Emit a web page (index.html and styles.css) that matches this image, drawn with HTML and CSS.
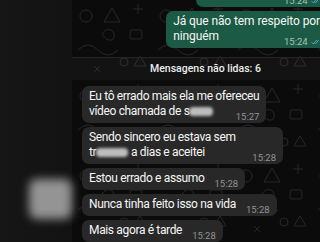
FILE: index.html
```html
<!DOCTYPE html>
<html lang="pt-BR">
<head>
    <meta charset="UTF-8">
    <meta name="viewport" content="width=device-width, initial-scale=1.0">
    <title>Conversa</title>
    <link rel="stylesheet" href="styles.css">
</head>
<body>
    <div class="screen">
        <aside class="side">
            <div class="blob"></div>
        </aside>

        <main class="chat">
            <div class="msg out cut">
                <span class="meta">15:24
                    <svg class="ticks" viewBox="0 0 12 7"><path d="M0.8 3.8l2.2 2.2 4.6-5.2M5.2 5.4l0.6 0.6 4.6-5.2"/></svg>
                </span>
            </div>
            <div class="msg out">Já que não tem respeito por<br>ninguém<span class="meta">15:24
                    <svg class="ticks" viewBox="0 0 12 7"><path d="M0.8 3.8l2.2 2.2 4.6-5.2M5.2 5.4l0.6 0.6 4.6-5.2"/></svg></span></div>

            <div class="unread">Mensagens não lidas: 6</div>

            <div class="msg in first">Eu tô errado mais ela me ofereceu<br>vídeo chamada de s<span class="hidden-word w1"></span><span class="meta">15:27</span></div>
            <div class="msg in wide">Sendo sincero eu estava sem<br>tr<span class="hidden-word w2"></span> a dias e aceitei<span class="meta">15:28</span></div>
            <div class="msg in">Estou errado e assumo<span class="meta">15:28</span></div>
            <div class="msg in">Nunca tinha feito isso na vida<span class="meta">15:28</span></div>
            <div class="msg in">Mais agora é tarde<span class="meta">15:28</span></div>
        </main>
    </div>
</body>
</html>
```

FILE: styles.css
```css
html, body {
    margin: 0;
    padding: 0;
    background: #111;
}
body {
    font-family: Roboto, "Liberation Sans", Arial, sans-serif;
    overflow: hidden;
}
.screen {
    display: flex;
    width: 320px;
    height: 242px;
    overflow: hidden;
}

/* blurred left part of the photo */
.side {
    flex: 0 0 72px;
    background: linear-gradient(90deg, #161616, #121212);
    padding: 179px 0 0 29px;
    box-sizing: border-box;
}
.blob {
    width: 43px;
    height: 40px;
    border-radius: 8px;
    background: #949494;
    filter: blur(5px);
}

/* chat column with wallpaper doodles */
.chat {
    flex: 0 0 267px;
    display: flex;
    flex-direction: column;
    background-color: #0b0b0b;
    background-image: url("data:image/svg+xml;utf8,<svg xmlns='http://www.w3.org/2000/svg' width='80' height='80' fill='none' stroke='%23262626' stroke-width='1'><circle cx='14' cy='16' r='6'/><path d='M40 8l8 14h-16z'/><rect x='58' y='30' width='12' height='9' rx='2'/><path d='M6 50q10-10 20 0t20 0'/><circle cx='52' cy='62' r='4'/><path d='M22 66l6 6M28 66l-6 6'/><path d='M66 4v10M61 9h10'/><path d='M30 34c4-6 10-6 12 0s-6 10-12 0z'/><path d='M68 56l6 10h-12z'/></svg>");
}

.msg {
    box-sizing: border-box;
    margin-top: 4px;
    padding: 3px 7px 1px 7px;
    border-radius: 7px;
    font-size: 12px;
    line-height: 15px;
    letter-spacing: -0.35px;
    color: #f6f6f6;
    white-space: nowrap;
}
.msg.in {
    align-self: flex-start;
    margin-left: 10px;
    background: #282828;
}
.msg.out {
    align-self: flex-end;
    margin-right: 12px;
    background: #1b5a44;
    letter-spacing: -0.1px;
}
.msg.cut {
    width: 131px;
    margin-top: -15px;
}
.msg.first {
    margin-top: 6px;
}
.msg.wide {
    width: 201px;
}

.meta {
    float: right;
    margin: 7px 0 0 10px;
    font-size: 9.5px;
    line-height: 11px;
    letter-spacing: 0;
    color: #929292;
}
.out .meta {
    color: #a3c5b8;
}
.ticks {
    width: 9px;
    height: 6px;
    margin-left: 1px;
    fill: none;
    stroke: #5cbbe8;
    stroke-width: 1.1;
}

.hidden-word {
    display: inline-block;
    height: 9px;
    border-radius: 4px;
    background: #bdbdbd;
    filter: blur(1.6px);
    vertical-align: -1px;
}
.w1 { width: 24px; }
.w2 { width: 32px; }

.unread {
    margin-top: 9px;
    padding: 5px 0;
    border-top: 1px solid #242424;
    background: rgba(255, 255, 255, 0.035);
    text-align: center;
    font-size: 10.5px;
    font-weight: 500;
    line-height: 12px;
    color: #ededed;
}
```
